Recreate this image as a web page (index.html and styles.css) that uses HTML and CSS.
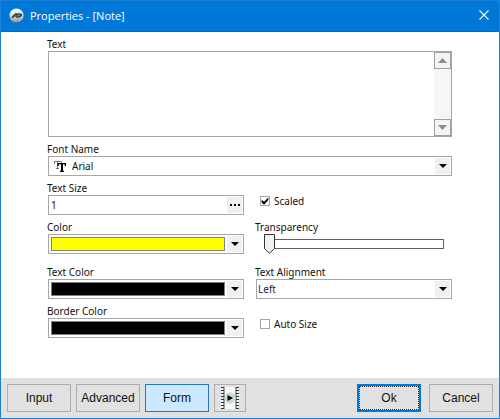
FILE: index.html
```html
<!DOCTYPE html>
<html lang="en">
<head>
    <meta charset="UTF-8">
    <meta name="viewport" content="width=device-width, initial-scale=1.0">
    <title>Properties - [Note]</title>
    <link rel="stylesheet" href="styles.css">
</head>
<body>
    <form class="dialog">
        <header class="title-bar">
            <svg class="logo" viewBox="0 0 16 16" aria-hidden="true">
                <defs>
                    <linearGradient id="ball" x1="0" y1="0" x2="0" y2="1">
                        <stop offset="0" stop-color="#fff"/>
                        <stop offset="0.5" stop-color="#dcdcdc"/>
                        <stop offset="1" stop-color="#8d8f92"/>
                    </linearGradient>
                </defs>
                <circle cx="8" cy="8" r="7.5" fill="url(#ball)"/>
                <path d="M2 10.5 L6.5 5.5 H11 Q14.5 5.5 14 8 Q13.2 10.3 9.8 10.3 H7 L8 9 H6 L4.8 10.5 Z" fill="#38424a"/>
                <path d="M9.3 7 H11.7 Q12 8.8 9 9 Z" fill="#4f9bb0"/>
                <path d="M7.6 6.8 L6.6 8 H7.9 Z" fill="#d8d8d8"/>
            </svg>
            <h1 class="title">Properties - [Note]</h1>
            <button type="button" class="close-button" aria-label="Close">
                <svg viewBox="0 0 10 10"><path d="M0.5 0.5 L9.5 9.5 M9.5 0.5 L0.5 9.5" stroke="#fff" stroke-width="1.1"/></svg>
            </button>
        </header>

        <main class="fields">
            <div class="field wide">
                <label for="noteText">Text</label>
                <div class="box text-box">
                    <textarea id="noteText"></textarea>
                    <div class="scroll">
                        <button type="button" aria-label="Scroll up"><svg viewBox="0 0 9 5"><path d="M0 5 L4.5 0 L9 5 Z"/></svg></button>
                        <button type="button" aria-label="Scroll down"><svg viewBox="0 0 9 5"><path d="M0 0 L4.5 5 L9 0 Z"/></svg></button>
                    </div>
                </div>
            </div>

            <div class="field wide">
                <label for="fontName">Font Name</label>
                <div class="box">
                    <svg class="font-icon" viewBox="0 0 12 11" aria-hidden="true">
                        <path d="M0.5 3 V0.5 H7.5 V3 M3.5 0.5 V7.5 M2 7.5 H5" fill="none" stroke="#777"/>
                        <path d="M3.5 2 H12 V5 H11 L10.5 3.3 H9 V9.5 L10 10 V11 H6 V10 L7 9.5 V3.3 H5.2 L4.5 5 H3.5 Z" fill="#000"/>
                    </svg>
                    <select id="fontName" class="font-select">
                        <option>Arial</option>
                    </select>
                    <span class="arrow"></span>
                </div>
            </div>

            <div class="field">
                <label for="textSize">Text Size</label>
                <div class="box">
                    <input type="text" id="textSize" value="1">
                    <button type="button" class="more-button" aria-label="Edit text size"><i></i><i></i><i></i></button>
                </div>
            </div>
            <label class="check"><input type="checkbox" checked>Scaled</label>

            <div class="field">
                <label for="color">Color</label>
                <div class="box">
                    <select id="color" class="swatch yellow"><option value="#ffff00"></option></select>
                    <span class="arrow"></span>
                </div>
            </div>
            <div class="field">
                <label for="transparency">Transparency</label>
                <input type="range" id="transparency" class="slider" min="0" max="100" value="0">
            </div>

            <div class="field spaced">
                <label for="textColor">Text Color</label>
                <div class="box">
                    <select id="textColor" class="swatch black"><option value="#000000"></option></select>
                    <span class="arrow"></span>
                </div>
            </div>
            <div class="field spaced">
                <label for="textAlignment">Text Alignment</label>
                <div class="box">
                    <select id="textAlignment" class="value">
                        <option>Left</option>
                    </select>
                    <span class="arrow"></span>
                </div>
            </div>

            <div class="field">
                <label for="borderColor">Border Color</label>
                <div class="box">
                    <select id="borderColor" class="swatch black"><option value="#000000"></option></select>
                    <span class="arrow"></span>
                </div>
            </div>
            <label class="check"><input type="checkbox">Auto Size</label>
        </main>

        <footer class="button-bar">
            <button type="button">Input</button>
            <button type="button">Advanced</button>
            <button type="button" class="selected">Form</button>
            <button type="button" class="preview-button" aria-label="Preview">
                <svg viewBox="0 0 20 22">
                    <rect x="1" y="0" width="18" height="22" fill="#f6f8f8"/>
                    <path d="M4 0 V22 M16 0 V22" stroke="#444"/>
                    <path d="M2.5 0 V22 M17.5 0 V22" stroke="#333" stroke-width="3" stroke-dasharray="1 2"/>
                    <circle cx="10" cy="11" r="5.5" fill="#ccd8dd"/>
                    <path d="M7.5 8 L13 11 L7.5 14 Z" fill="#000"/>
                </svg>
            </button>
            <button type="submit" class="ok-button"><span>Ok</span></button>
            <button type="button">Cancel</button>
        </footer>
    </form>
</body>
</html>
```
FILE: styles.css
```css
* {
    box-sizing: border-box;
}

body {
    margin: 0;
    background: #fff;
    color: #111;
    font-family: 'Noto Sans', sans-serif;
    font-size: 10px;
}

input,
select,
textarea,
button {
    margin: 0;
    padding: 0;
    border: none;
    border-radius: 0;
    outline: none;
    background: none;
    color: inherit;
    font: inherit;
}

svg {
    display: block;
}

.dialog {
    display: flex;
    flex-direction: column;
    min-height: 100vh;
    border: 1px solid #1a80d8;
}

/* Title bar */
.title-bar {
    display: flex;
    align-items: center;
    height: 31px;
    padding: 0 10px 2px 8px;
    background: #0078d7;
    border-bottom: 1px solid #2c5f8c;
}

.logo {
    width: 15px;
    height: 15px;
}

.title {
    flex: 1;
    margin: 0 0 0 6px;
    color: #fff;
    font-family: 'Open Sans', sans-serif;
    font-size: 11px;
    font-weight: normal;
}

.close-button svg {
    width: 10px;
    height: 10px;
}

/* Fields */
.fields {
    flex: 1;
    display: grid;
    grid-template-columns: 1fr 1fr;
    align-content: start;
    gap: 6px 12px;
    padding: 6px 47px 24px;
}

.field {
    display: flex;
    flex-direction: column;
}

.field label {
    height: 13px;
    margin-left: -1px;
    line-height: 12px;
}

.wide {
    grid-column: 1 / -1;
}

.spaced {
    margin-top: 6px;
}

.box {
    display: flex;
    align-items: center;
    height: 20px;
    padding: 1px;
    border: 1px solid #a6a6a6;
    background: #fff;
}

.box input,
.box select {
    flex: 1;
    min-width: 0;
    height: 16px;
    padding-left: 1px;
    appearance: none;
}

.text-box {
    align-items: stretch;
    height: 86px;
    padding: 0;
}

.text-box textarea {
    flex: 1;
    resize: none;
}

.scroll {
    display: flex;
    flex-direction: column;
    justify-content: space-between;
    background: #f6f6f6;
}

.scroll button {
    display: flex;
    align-items: center;
    justify-content: center;
    width: 17px;
    height: 17px;
    border: 1px solid #a0a0a0;
    background: #f4f4f4;
}

.scroll svg {
    width: 9px;
    height: 5px;
    fill: #8c8c8c;
}

.arrow {
    display: flex;
    align-items: center;
    justify-content: center;
    width: 15px;
    height: 16px;
    background: #f0f0f0;
    pointer-events: none;
}

.arrow::before {
    content: '';
    border: 4px solid transparent;
    border-top-color: #000;
    border-bottom: none;
}

.font-icon {
    width: 12px;
    height: 11px;
    margin-left: 4px;
}

.box .font-select {
    padding-left: 6px;
}

.box .value {
    padding-left: 0;
    color: #1c1c50;
}

.more-button {
    display: flex;
    align-items: center;
    justify-content: center;
    gap: 2px;
    width: 15px;
    height: 16px;
    background: #f0f0f0;
}

.more-button i {
    width: 2px;
    height: 2px;
    background: #000;
}

.box .swatch {
    height: 14px;
    margin: 0 2px 0 1px;
    border: 1px solid #808080;
}

.yellow {
    background: #ff0;
}

.black {
    background: #000;
}

.check {
    display: flex;
    align-items: center;
    align-self: end;
    gap: 4px;
    height: 20px;
    margin: 0 0 4px 4px;
}

.check input {
    width: 10px;
    height: 10px;
    border: 1px solid #a6a6a6;
    background: #fff;
    appearance: none;
}

.check input:checked::before {
    content: '';
    display: block;
    width: 8px;
    height: 8px;
    background: #000;
    clip-path: polygon(8% 35%, 38% 60%, 92% 5%, 92% 38%, 38% 96%, 8% 68%);
}

.slider {
    width: auto;
    height: 20px;
    margin: 0 8px;
    appearance: none;
}

.slider::-webkit-slider-runnable-track {
    height: 10px;
    border: 1px solid #606060;
    background: #fff;
}

.slider::-webkit-slider-thumb {
    width: 11px;
    height: 20px;
    margin: -6px 0 0 -1px;
    background: url("data:image/svg+xml,%3Csvg xmlns='http://www.w3.org/2000/svg' viewBox='0 0 11 20'%3E%3Cpath d='M.5 .5H10.5V14.5L5.5 19.3L.5 14.5Z' fill='%23f0f0f0' stroke='%23333'/%3E%3C/svg%3E");
    appearance: none;
}

/* Buttons */
.button-bar {
    display: flex;
    gap: 5px;
    padding: 6px;
    background: #e1e1e1;
}

.button-bar button {
    width: 64px;
    height: 28px;
    border: 1px solid #adadad;
    background: #e1e1e1;
    font-family: 'Liberation Sans', Arial, sans-serif;
    font-size: 12px;
}

.button-bar .selected {
    border: 1px solid #2a78b8;
    background: #cce8ff;
}

.button-bar .preview-button {
    display: flex;
    align-items: center;
    justify-content: center;
    width: 32px;
}

.preview-button svg {
    width: 20px;
    height: 22px;
}

.button-bar .ok-button {
    margin: 0 3px 0 auto;
    border: 2px solid #0078d7;
}

.ok-button span {
    display: flex;
    align-items: center;
    justify-content: center;
    height: 24px;
    border: 1px dotted #222;
}
```
